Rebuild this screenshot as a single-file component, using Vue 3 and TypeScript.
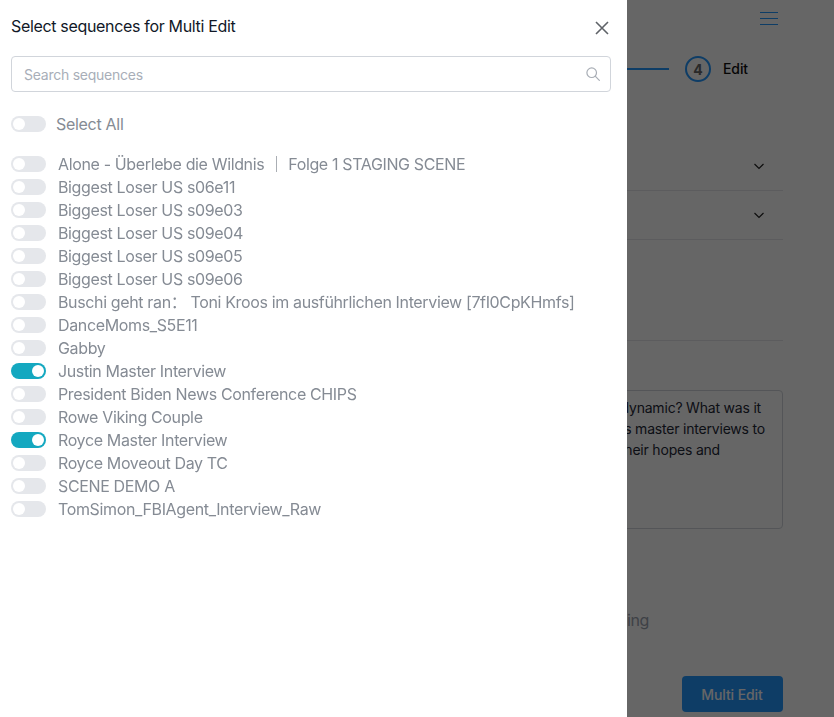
<script setup lang="ts">
interface Sequence {
  name: string
  on: boolean
}

const sequences: Sequence[] = [
  { name: 'Alone - Überlebe die Wildnis ｜ Folge 1 STAGING SCENE', on: false },
  { name: 'Biggest Loser US s06e11', on: false },
  { name: 'Biggest Loser US s09e03', on: false },
  { name: 'Biggest Loser US s09e04', on: false },
  { name: 'Biggest Loser US s09e05', on: false },
  { name: 'Biggest Loser US s09e06', on: false },
  { name: 'Buschi geht ran： Toni Kroos im ausführlichen Interview [7fI0CpKHmfs]', on: false },
  { name: 'DanceMoms_S5E11', on: false },
  { name: 'Gabby', on: false },
  { name: 'Justin Master Interview', on: true },
  { name: 'President Biden News Conference CHIPS', on: false },
  { name: 'Rowe Viking Couple', on: false },
  { name: 'Royce Master Interview', on: true },
  { name: 'Royce Moveout Day TC', on: false },
  { name: 'SCENE DEMO A', on: false },
  { name: 'TomSimon_FBIAgent_Interview_Raw', on: false },
]
</script>

<template>
  <div class="page">
    <div class="under">
      <div class="topbar">
        <svg class="burger" width="18" height="14" viewBox="0 0 18 14" fill="none" stroke="#2598ff" stroke-width="1">
          <path d="M0 .5h18M0 6.500h18M0 12.500h18" />
        </svg>
      </div>
      <div class="stepper">
        <span class="step-line"></span>
        <span class="step-num">4</span>
        <span class="step-label">Edit</span>
      </div>
      <div class="accordion first">
        <svg width="12" height="12" viewBox="0 0 12 12" fill="none" stroke="#222" stroke-width="1.2"><path d="M1.500 4l4.500 4.500L10.500 4" /></svg>
      </div>
      <div class="accordion">
        <svg width="12" height="12" viewBox="0 0 12 12" fill="none" stroke="#222" stroke-width="1.2"><path d="M1.500 4l4.500 4.500L10.500 4" /></svg>
      </div>
      <div class="rule-block"></div>
      <div class="prompt">
        <div class="prompt-line">dynamic? What was it</div>
        <div class="prompt-line">s master interviews to</div>
        <div class="prompt-line">their hopes and</div>
      </div>
      <div class="muted">ing</div>
      <div class="actions"><button class="multi">Multi Edit</button></div>
    </div>

    <div class="scrim"></div>

    <aside class="panel">
      <header class="panel-head">
        <h2 class="panel-title">Select sequences for Multi Edit</h2>
        <svg class="close" width="14" height="14" viewBox="0 0 14 14" fill="none" stroke="#5f6368" stroke-width="1.6">
          <path d="M1 1l12 12M13 1L1 13" />
        </svg>
      </header>

      <label class="search">
        <span class="placeholder">Search sequences</span>
        <svg width="14" height="14" viewBox="0 0 14 14" fill="none" stroke="#a8adb5" stroke-width="1.2">
          <circle cx="5.700" cy="5.700" r="4.800" />
          <path d="M9.200 9.200l4.500 4.500" />
        </svg>
      </label>

      <div class="select-all">
        <span class="toggle"><span class="knob"></span></span>
        <span class="all-label">Select All</span>
      </div>

      <ul class="list">
        <li v-for="s in sequences" :key="s.name" class="row">
          <span class="toggle" :class="{ on: s.on }"><span class="knob"></span></span>
          <span class="name">{{ s.name }}</span>
        </li>
      </ul>
    </aside>
  </div>
</template>

<style>
html, body { margin: 0; padding: 0; }
</style>

<style scoped>
.page {
  position: relative;
  width: 834px;
  height: 717px;
  overflow: hidden;
  background: #fff;
  font-family: Inter, "Noto Sans CJK SC", sans-serif;
}
.under {
  width: 783px;
  height: 717px;
  display: flex;
  flex-direction: column;
  align-items: stretch;
}
.topbar {
  height: 56px;
  display: flex;
  justify-content: flex-end;
  align-items: flex-start;
  padding: 12px 5px 0 0;
  box-sizing: border-box;
}
.burger { display: block; }
.stepper {
  height: 26px;
  display: flex;
  justify-content: flex-end;
  align-items: center;
  padding-right: 35px;
}
.step-line { width: 60px; height: 2px; background: #2598ff; margin-right: 16px; }
.step-num {
  width: 26px;
  height: 26px;
  box-sizing: border-box;
  border: 2px solid #2598ff;
  border-radius: 50%;
  display: flex;
  align-items: center;
  justify-content: center;
  font-size: 14px;
  font-weight: 700;
  color: #666;
  margin-right: 12px;
}
.step-label {
  font-size: 14px;
  line-height: 24px;
  letter-spacing: -0.1px;
  color: #111;
  font-weight: 500;
}
.accordion {
  height: 49px;
  box-sizing: border-box;
  border-bottom: 1px solid #e5e7eb;
  display: flex;
  justify-content: flex-end;
  align-items: center;
  padding-right: 18px;
}
.accordion.first { margin-top: 59px; height: 50px; }
.rule-block {
  height: 101px;
  box-sizing: border-box;
  border-bottom: 1px solid #e5e7eb;
}
.prompt {
  margin-top: 49px;
  height: 139px;
  box-sizing: border-box;
  border: 1px solid #d1d5db;
  border-radius: 4px;
  padding: 6px 17px 0 0;
  font-size: 14px;
  line-height: 21px;
  letter-spacing: -0.2px;
  color: #1f2937;
  display: flex;
  flex-direction: column;
  align-items: flex-end;
}
.prompt-line { white-space: nowrap; }
.prompt-line:nth-child(1) { margin-right: 4px; }
.prompt-line:nth-child(3) { margin-right: 45px; }
.muted {
  margin-top: 81px;
  font-size: 16px;
  line-height: 20px;
  letter-spacing: -0.4px;
  color: #9ca3af;
  padding-left: 627px;
}
.actions {
  margin-top: 46px;
  display: flex;
  justify-content: flex-end;
}
.multi {
  width: 101px;
  height: 36px;
  border: none;
  border-radius: 4px;
  background: #2598ff;
  color: #fff;
  font: 500 14px Inter, sans-serif;
  letter-spacing: -0.1px;
  padding: 0 1px 0 0;
}
.scrim {
  position: absolute;
  inset: 0;
  background: rgba(0, 0, 0, 0.6);
}
.panel {
  position: absolute;
  left: 0;
  top: 0;
  bottom: 0;
  width: 627px;
  box-sizing: border-box;
  background: #fff;
  padding: 0 16px 0 11px;
}
.panel-head {
  height: 56px;
  display: flex;
  align-items: center;
  justify-content: space-between;
  padding-bottom: 4px;
  box-sizing: border-box;
}
.panel-title {
  margin: 0;
  font-size: 16px;
  font-weight: 400;
  letter-spacing: -0.33px;
  color: #111827;
}
.close { margin-right: 2px; margin-top: 4px; }
.search {
  height: 36px;
  box-sizing: border-box;
  border: 1px solid #d1d5db;
  border-radius: 4px;
  display: flex;
  align-items: center;
  justify-content: space-between;
  padding: 0 10px 0 12px;
}
.placeholder { font-size: 14px; letter-spacing: -0.25px; color: #a8aeb8; }
.select-all {
  margin-top: 22px;
  height: 20px;
  display: flex;
  align-items: center;
  gap: 10px;
}
.all-label { font-size: 16px; letter-spacing: -0.3px; color: #858b94; }
.list {
  list-style: none;
  margin: 18px 0 0;
  padding: 0;
}
.row {
  height: 23px;
  display: flex;
  align-items: center;
  gap: 12px;
}
.name {
  font-size: 16px;
  line-height: 20px;
  letter-spacing: -0.36px;
  color: #858b94;
  white-space: nowrap;
  will-change: opacity;
}
.toggle {
  position: relative;
  flex: none;
  width: 35px;
  height: 16px;
  border-radius: 8px;
  background: #e5e7eb;
}
.knob {
  position: absolute;
  left: 2px;
  top: 2px;
  width: 12px;
  height: 12px;
  border-radius: 50%;
  background: #fff;
}
.toggle.on { background: #14a8c0; }
.toggle.on .knob { left: auto; right: 2px; }
</style>
